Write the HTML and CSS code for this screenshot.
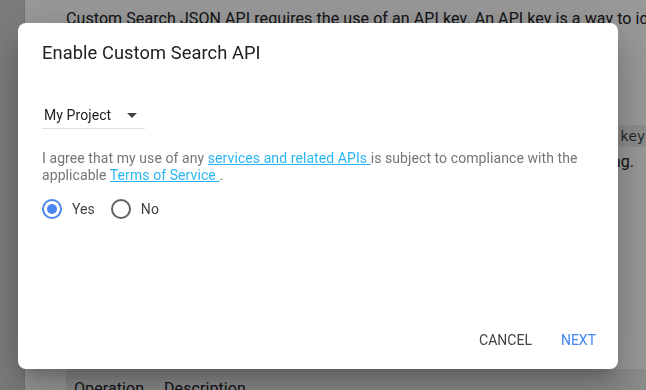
FILE: index.html
```html
<!DOCTYPE html>
<html lang="en">
<head>
    <meta charset="UTF-8">
    <meta name="viewport" content="width=device-width, initial-scale=1.0">
    <title>Custom Search JSON API</title>
    <link rel="stylesheet" href="styles.css">
</head>
<body>

    <div class="page">
        <div class="sidebar"></div>
        <div class="main">
            <p class="intro">Custom Search JSON API requires the use of an API key. An API key is a way to identify your client to Google.</p>
            <p class="intro-more">Once you have an API key, your application can append the query parameter key=yourAPIKey to all request URLs.</p>
            <div class="code">
                <span class="code-lead">https://www.googleapis.com/customsearch/v1?</span>
                <span>key=INSERT_YOUR_API_KEY&amp;cx=017576662512468239146:omuauf_lfve&amp;q=lectures</span>
            </div>
            <p class="note">Paste the request into a browser to test the setting.</p>
            <div class="table-head">
                <span class="col-op">Operation</span>
                <span>Description</span>
            </div>
        </div>
    </div>

    <!-- Modal -->
    <div class="scrim"></div>
    <div class="dialog">
        <h2 class="dialog-title">Enable Custom Search API</h2>

        <div class="select">
            <span>My Project</span>
            <span class="select-arrow"></span>
        </div>

        <p class="terms">I agree that my use of any <a href="#">services and related APIs </a>is subject to compliance with the applicable <a href="#">Terms of Service </a>.</p>

        <div class="radios">
            <label class="radio">
                <span class="radio-circle checked"></span>
                Yes
            </label>
            <label class="radio">
                <span class="radio-circle"></span>
                No
            </label>
        </div>

        <div class="actions">
            <button class="btn">Cancel</button>
            <button class="btn btn-primary">Next</button>
        </div>
    </div>

</body>
</html>
```

FILE: styles.css
```css
body {
    margin: 0;
    font-family: 'Roboto', 'Liberation Sans', sans-serif;
    letter-spacing: 0.08px;
    background: #ffffff;
    color: #202124;
    overflow: hidden;
    height: 390px;
}

/* page behind the dialog */
.page {
    display: flex;
    height: 390px;
}

.sidebar {
    width: 24px;
    flex-shrink: 0;
    background: #d0d0d0;
    border-right: 1px solid #c4c4c4;
}

.main {
    flex: 1;
    min-width: 0;
    padding-left: 41px;
    overflow: hidden;
}

.intro {
    margin: 7px 0 0;
    font-size: 16px;
    line-height: 24px;
    white-space: nowrap;
}

.intro-more {
    margin: 12px 0 0;
    max-width: 500px;
    height: 48px;
    overflow: hidden;
    font-size: 16px;
    line-height: 24px;
}

.code {
    display: flex;
    margin-top: 34px;
    margin-left: -16px;
    padding-left: 16px;
    height: 22px;
    line-height: 22px;
    background: #ececec;
    color: #37474f;
    font-family: 'DejaVu Sans Mono', monospace;
    font-size: 14px;
    letter-spacing: 0;
    white-space: nowrap;
}

.code-lead {
    width: 554px;
    flex-shrink: 0;
    overflow: hidden;
}

.note {
    margin: 3px 0 0;
    padding-right: 12px;
    font-size: 16px;
    line-height: 24px;
    text-align: right;
    white-space: nowrap;
}

.table-head {
    display: flex;
    margin-top: 195px;
    height: 40px;
    padding-left: 8px;
    background: #e8e8e8;
    font-size: 16px;
    line-height: 40px;
}

.col-op {
    width: 90px;
}

/* modal */
.scrim {
    position: fixed;
    top: 0;
    left: 0;
    width: 100%;
    height: 100%;
    background-color: rgba(0, 0, 0, 0.4);
}

.dialog {
    position: fixed;
    left: 18px;
    top: 23px;
    width: 600px;
    height: 346px;
    box-sizing: border-box;
    display: flex;
    flex-direction: column;
    padding: 18px 24px 0;
    background: #ffffff;
    border-radius: 8px;
    box-shadow: 0 11px 15px -7px rgba(0, 0, 0, 0.2), 0 24px 38px 3px rgba(0, 0, 0, 0.14), 0 9px 46px 8px rgba(0, 0, 0, 0.12);
}

.dialog-title {
    margin: 0;
    font-size: 18.3px;
    font-weight: 400;
    line-height: 24px;
    color: #212121;
}

.select {
    display: flex;
    align-items: center;
    width: 103px;
    margin-top: 40px;
    padding: 0 0 3px 2px;
    box-sizing: border-box;
    border-bottom: 1px solid #e0e0e0;
    font-size: 14px;
    line-height: 20px;
    color: #212121;
}

.select-arrow {
    margin-left: auto;
    margin-right: 8px;
    width: 0;
    height: 0;
    border-left: 5px solid transparent;
    border-right: 5px solid transparent;
    border-top: 5px solid #424242;
}

.terms {
    margin: 21px 0 0;
    font-size: 14px;
    line-height: 17px;
    color: #757575;
}

.terms a {
    color: #29b6f6;
    text-decoration: underline;
}

.radios {
    display: flex;
    gap: 16px;
    margin-top: 15px;
}

.radio {
    display: flex;
    align-items: center;
    gap: 10px;
    font-size: 14px;
    line-height: 20px;
    color: #424242;
}

.radio-circle {
    width: 20px;
    height: 20px;
    box-sizing: border-box;
    border: 2px solid #616161;
    border-radius: 50%;
    display: flex;
    align-items: center;
    justify-content: center;
}

.radio-circle.checked {
    border-color: #4a86f0;
}

.radio-circle.checked::after {
    content: "";
    width: 10px;
    height: 10px;
    border-radius: 50%;
    background: #4a86f0;
}

.actions {
    display: flex;
    justify-content: flex-end;
    gap: 13px;
    margin-top: auto;
    margin-right: -10px;
    padding-bottom: 11px;
}

.btn {
    height: 36px;
    padding: 0 8px;
    border: none;
    background: none;
    font-family: inherit;
    font-size: 14px;
    letter-spacing: 0;
    text-transform: uppercase;
    color: #424242;
    cursor: pointer;
}

.btn-primary {
    color: #4285f4;
}
```
